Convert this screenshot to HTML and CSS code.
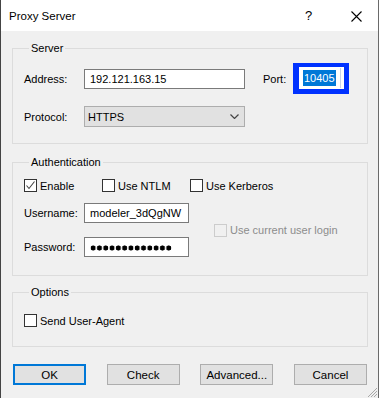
FILE: index.html
```html
<!DOCTYPE html>
<html lang="en">
<head>
  <meta charset="UTF-8" />
  <title>Proxy Server</title>
  <link rel="stylesheet" href="styles.css">
</head>
<body>

  <div class="window">
    <header class="titlebar">
      <span class="title">Proxy Server</span>
      <span class="help">?</span>
      <span class="close">
        <svg width="11" height="11" viewBox="0 0 11 11"><path d="M0.5 0.5 L10.5 10.5 M10.5 0.5 L0.5 10.5" stroke="#000" stroke-width="1.1" fill="none"/></svg>
      </span>
    </header>

    <main class="content">
      <fieldset class="group group-server">
        <legend>Server</legend>
        <div class="row row-address">
          <span class="lbl">Address:</span>
          <div class="field field-address">192.121.163.15</div>
          <span class="lbl lbl-port">Port:</span>
          <div class="focus-ring">
            <div class="field field-port"><span class="selected">10405</span></div>
          </div>
        </div>
        <div class="row row-protocol">
          <span class="lbl">Protocol:</span>
          <div class="combo">
            <span>HTTPS</span>
            <svg width="9" height="5" viewBox="0 0 9 5"><path d="M0.5 0.5 L4.5 4.5 L8.5 0.5" stroke="#444" stroke-width="1.2" fill="none"/></svg>
          </div>
        </div>
      </fieldset>

      <fieldset class="group group-auth">
        <legend>Authentication</legend>
        <div class="checks">
          <label class="check check-enable">
            <span class="box">
              <svg width="11" height="11" viewBox="0 0 11 11"><path d="M1.5 5.5 L4 8.5 L9.5 1.5" stroke="#444" stroke-width="1.1" fill="none"/></svg>
            </span>Enable
          </label>
          <label class="check check-ntlm"><span class="box"></span>Use NTLM</label>
          <label class="check"><span class="box"></span>Use Kerberos</label>
        </div>
        <div class="credentials">
          <div class="cred-fields">
            <div class="row row-cred">
              <span class="lbl">Username:</span>
              <div class="field field-user">modeler_3dQgNW</div>
            </div>
            <div class="row row-cred row-pass">
              <span class="lbl">Password:</span>
              <div class="field field-user"><span class="dots"></span></div>
            </div>
          </div>
          <label class="check disabled"><span class="box"></span>Use current user login</label>
        </div>
      </fieldset>

      <fieldset class="group group-options">
        <legend>Options</legend>
        <label class="check"><span class="box"></span>Send User-Agent</label>
      </fieldset>

      <div class="buttons">
        <button class="btn btn-default">OK</button>
        <button class="btn">Check</button>
        <button class="btn">Advanced...</button>
        <button class="btn">Cancel</button>
      </div>
    </main>

    <svg class="grip" width="11" height="11" viewBox="0 0 11 11">
      <g fill="#a8a8a8">
        <rect x="9" y="1" width="1" height="1"/><rect x="8" y="2" width="1" height="1"/><rect x="7" y="3" width="1" height="1"/><rect x="6" y="4" width="1" height="1"/><rect x="5" y="5" width="1" height="1"/><rect x="4" y="6" width="1" height="1"/><rect x="3" y="7" width="1" height="1"/><rect x="2" y="8" width="1" height="1"/><rect x="1" y="9" width="1" height="1"/>
        <rect x="9" y="4" width="1" height="1"/><rect x="8" y="5" width="1" height="1"/><rect x="7" y="6" width="1" height="1"/><rect x="6" y="7" width="1" height="1"/><rect x="5" y="8" width="1" height="1"/><rect x="4" y="9" width="1" height="1"/>
        <rect x="9" y="7" width="1" height="1"/><rect x="8" y="8" width="1" height="1"/><rect x="7" y="9" width="1" height="1"/>
      </g>
    </svg>
  </div>

</body>
</html>
```

FILE: styles.css
```css
body {
  margin: 0;
  padding: 0;
  font-family: 'Liberation Sans', Arial, sans-serif;
  font-size: 11px;
  color: #000;
  background-color: #f0f0f0;
}

.window {
  position: relative;
  width: 379px;
  height: 398px;
  box-sizing: border-box;
  background-color: #f0f0f0;
  border-left: 1px solid #444;
  border-right: 1px solid #6a6a6a;
  overflow: hidden;
}

.titlebar {
  display: flex;
  align-items: center;
  height: 31px;
  background-color: #fff;
  padding-left: 8px;
}

.title {
  font-size: 11.5px;
  flex: 1;
}

.help {
  font-size: 13px;
  width: 46px;
  margin-top: -1px;
}

.close {
  display: flex;
  width: 27px;
  margin-top: 1px;
}

.content {
  padding: 9px 10px 0 11px;
}

.group {
  margin: 0;
  padding: 0 10px 0 11px;
  border: 1px solid #dcdcdc;
  min-width: 0;
}

.group legend {
  margin-left: 5px;
  padding: 0 2px;
  line-height: 16px;
}

.group-server {
  padding-top: 7px;
  padding-bottom: 16px;
}

.group-auth {
  margin-top: 10px;
  padding-top: 8px;
  padding-bottom: 18px;
}

.group-options {
  margin-top: 8px;
  padding-top: 13px;
  padding-bottom: 18px;
}

.row {
  display: flex;
  align-items: center;
}

.row-address {
  height: 31px;
}

.row-protocol {
  margin-top: 12px;
}

.lbl {
  width: 60px;
  flex-shrink: 0;
}

.lbl-port {
  width: 30px;
  margin-left: 18px;
}

.field {
  box-sizing: border-box;
  height: 20px;
  line-height: 18px;
  background-color: #fff;
  border: 1px solid #7a7a7a;
  padding-left: 5px;
  white-space: nowrap;
}

.field-address {
  width: 161px;
}

.focus-ring {
  box-sizing: border-box;
  width: 56px;
  height: 31px;
  background-color: #0032ff;
  padding: 4px 5px 5px 6px;
}

.field-port {
  width: 45px;
  height: 22px;
  border: 1px solid #fff;
  box-shadow: inset -2px 0 0 #fff, inset -3px 0 0 #c9d3e6;
  padding: 2px 0 0 3px;
  line-height: 16px;
}

.selected {
  display: inline-block;
  background-color: #0078d7;
  color: #fff;
  padding: 0 1px;
  height: 16px;
}

.combo {
  box-sizing: border-box;
  display: flex;
  align-items: center;
  justify-content: space-between;
  width: 161px;
  height: 21px;
  background-color: #e1e1e1;
  border: 1px solid #adadad;
  padding: 0 5px 0 3px;
}

.checks {
  display: flex;
  height: 15px;
  align-items: center;
}

.check {
  display: flex;
  align-items: center;
  white-space: nowrap;
}

.check-enable {
  width: 78px;
}

.check-ntlm {
  width: 88px;
}

.box {
  box-sizing: border-box;
  display: flex;
  align-items: center;
  justify-content: center;
  width: 13px;
  height: 13px;
  background-color: #fff;
  border: 1px solid #333;
  margin-right: 3px;
}

.disabled {
  color: #8c8c8c;
  margin-left: 25px;
}

.disabled .box {
  background-color: #f0f0f0;
  border-color: #cccccc;
}

.credentials {
  display: flex;
  align-items: center;
  margin-top: 10px;
}

.field-user {
  width: 105px;
}

.row-pass {
  margin-top: 14px;
}

.dots {
  display: inline-block;
  width: 82px;
  height: 6px;
  vertical-align: middle;
  background: radial-gradient(circle, #000 2.3px, transparent 2.8px) 0 0 / 6.3px 6px repeat-x;
}

.group-options .check {
  height: 15px;
}

.buttons {
  display: flex;
  justify-content: space-between;
  margin-top: 17px;
  padding: 0 1px;
}

.btn {
  box-sizing: border-box;
  width: 73px;
  height: 21px;
  padding: 0;
  font-family: inherit;
  font-size: 11.5px;
  color: #000;
  background-color: #e1e1e1;
  border: 1px solid #adadad;
  border-radius: 0;
}

.btn-default {
  border: 2px solid #0078d7;
}

.grip {
  position: absolute;
  right: 0;
  bottom: 0;
}
```
